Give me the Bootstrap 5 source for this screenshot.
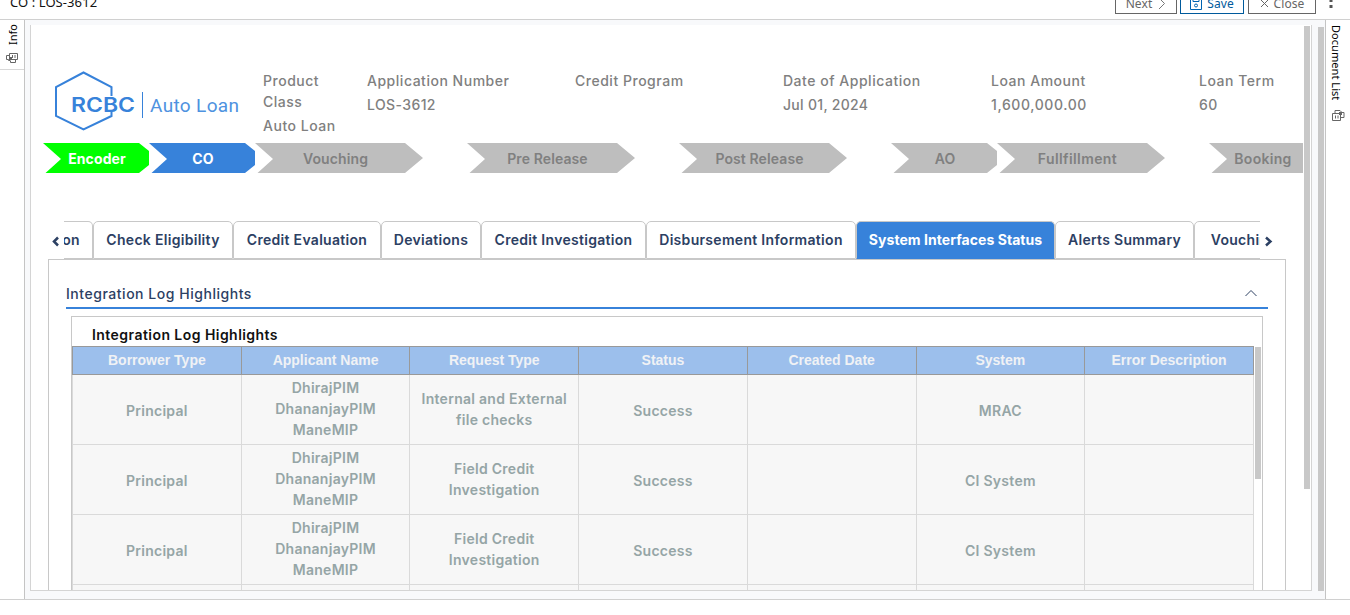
<!DOCTYPE html>
<html lang="en">
<head>
<meta charset="utf-8">
<title>CO : LOS-3612</title>
<link href="https://cdn.jsdelivr.net/npm/bootstrap@5.3.0/dist/css/bootstrap.min.css" rel="stylesheet">
<style>
body{font-family:Inter,"Noto Sans",sans-serif;font-size:14px;line-height:21px;height:615px;overflow:hidden;background:#fff;color:#808080;font-weight:500}
.topbar{height:20px;border-bottom:1px solid #d0d0d0;font-family:"Noto Sans",sans-serif;font-weight:400}
.caption-text{color:#111;font-size:13px;line-height:18px;margin-top:-7px;margin-left:10px;letter-spacing:.08px}
.tool{height:22px;margin-top:-8px;border:1px solid #666;color:#666;font-size:12px;line-height:20px;border-radius:0;padding:0;font-family:"Noto Sans",sans-serif;letter-spacing:.1px;display:flex;align-items:center;justify-content:center;gap:5px;padding-top:1px}
.tool.save{border-color:#005a9c;color:#005a9c}
.workspace{height:580px;border-bottom:1px solid #d0d0d0}
.rail{font-family:"Noto Sans",sans-serif;font-size:11px;font-weight:400;color:#000;line-height:16px}
.rail-left{width:25px;border-right:1px solid #c4c4c4}
.rail-left .rail-item{height:50px;border-bottom:1px solid #d8d8d8}
.rail-right{width:25px;border-left:1px solid #c4c4c4}
.vtext{writing-mode:vertical-rl}
.stage-bg{background:#f8f9fb;padding:5px 0 0 5px}
.sheet{width:1282px;height:566px;border:1px solid #d4d4d4;border-top:0;background:#fff;overflow:hidden}
.sheet-main{width:1272px;margin-right:1px}
.bar-thumb{width:6px;background:#c8c8c8}
.brandbox{width:184px;margin-left:24px;margin-top:46px}
.facts{margin-left:24px;margin-top:45px;letter-spacing:.52px}
.facts>div{width:208px;flex:none}
.facts>div:first-child{width:104px}
.facts span{display:block;margin-bottom:3px}
.facts>div:first-child span:first-child{width:60px}
.steps{height:30px;margin-left:12px;font-weight:700;letter-spacing:.1px}
.slot{width:212px;flex:none;overflow:hidden}
.slot.short{width:106px}
.chev{width:168px;height:30px;background:#bebebe;color:#808080;line-height:32px;text-align:center;clip-path:polygon(0 0,150px 0,168px 15px,150px 30px,2.5px 30px,18px 16px);padding-right:7px;font-weight:600}
.slot.short .chev{width:106px;padding:0 0 0 2px;clip-path:polygon(0 0,96px 0,106px 8px,106px 22px,96px 30px,2.5px 30px,18px 16px)}
.slot.short .done{background:#0f0;color:#fff;font-weight:700}
.slot.short .now{background:#3782da;color:#fff;font-weight:700}
.tabrow{margin:48px 0 0 17px;width:1240px;height:38px;color:#2c4063}
.tabclip{width:1196px;overflow:hidden}
.tabx{flex:none;height:38px;border:1px solid #c8c8c8;border-radius:5px 5px 0 0;text-align:center;line-height:36px;white-space:nowrap;font-weight:600;font-size:14px;letter-spacing:.3px}
.tabx.on{background:#3782da;color:#fff;border-color:#c8c8c8 #c8c8c8 #3782da #c8c8c8;font-weight:700;letter-spacing:.05px}
.panelx{margin-left:17px;width:1238px;height:340px;border:1px solid #c8c8c8;padding:23px 17px 0}
.sect{height:26px;border-bottom:2px solid #3782da;color:#2c4063;width:1202px;letter-spacing:.53px}
.logbox{width:1192px;height:300px;margin:7px 0 0 5px;border:1px solid #c8c8c8}
.logtitle{color:#111;font-weight:600;height:29px;padding:7px 0 0 20px;letter-spacing:.45px}
.logtable{width:1182px;table-layout:fixed;border-collapse:collapse;text-align:center}
.logtable th{height:28px;background:#9cbfec;border:1px solid #999;color:#f0f2f5;font-family:"Liberation Sans",sans-serif;font-weight:700;font-size:14px;padding:0 0 2px;text-align:center;line-height:20px}
.logtable td{height:70px;background:#f7f7f7;border:1px solid #dadada;color:#95a5a6;padding:2px 8px 0;font-weight:600;font-size:14px;line-height:21px;letter-spacing:.28px}
.logtable td.multi{padding:0 8px 2px}
</style>
</head>
<body>
<header class="topbar d-flex">
  <div class="caption-text me-auto">CO : LOS-3612</div>
  <div class="btn tool" style="width:62px;margin-right:3px">Next <svg width="9" height="13" viewBox="0 0 9 13" fill="none" stroke="#777"><path d="M2 1l5.500 5.500L2 12"/></svg></div>
  <div class="btn tool save" style="width:64px;margin-right:4px"><svg width="12" height="12" viewBox="0 0 12 12" fill="none" stroke="#0063b1"><path d="M.5.500h11v11H.5zM3 .5v3h6v-3"/><circle cx="6" cy="7.500" r="1.500"/></svg> Save</div>
  <div class="btn tool" style="width:68px;margin-right:12px"><svg width="9" height="9" viewBox="0 0 9 9" stroke="#666"><path d="M1 1l7 7M8 1L1 8"/></svg> Close</div>
  <svg width="22" height="10" viewBox="0 0 22 10" fill="#555"><path d="M1.500 0h3v2h-3zM1.500 5h3v3h-3z"/></svg>
</header>
<div class="workspace d-flex">
  <aside class="rail rail-left">
    <div class="rail-item d-flex flex-column align-items-center">
      <div class="vtext" style="transform:rotate(180deg);height:25px;margin-left:2px">Info</div>
      <svg style="margin-top:8px;flex:none" width="13" height="11" viewBox="0 0 13 11" fill="none" stroke="#666"><path d="M3.500.500h8v6h-8zM9.500 6.500v3H4.500V8M3 2.500H.5v4h2v1h2M6.500 2v3M9 2v3"/><path fill="#666" stroke="none" d="M3 4h3v3H3z"/></svg>
    </div>
  </aside>
  <main class="stage-bg flex-grow-1 d-flex">
    <div class="sheet d-flex">
      <div class="sheet-main overflow-hidden">
        <div class="d-flex" style="height:118px">
          <svg class="brandbox flex-shrink-0" height="60" viewBox="0 0 184 60">
            <path d="M56.500 25V16L28.500 1.500 1 16v29L28.500 58.500 56.500 45v-5" fill="none" stroke="#3782da" stroke-width="2"/>
            <text x="16" y="41" font-family="Inter" font-size="20" font-weight="600" fill="#3782da" textLength="64" lengthAdjust="spacingAndGlyphs">RCBC</text>
            <path d="M87.500 21v26" stroke="#3782da"/>
            <text x="95" y="41" font-family="Roboto" font-size="19" font-weight="400" fill="#4e92e0" textLength="89">Auto Loan</text>
          </svg>
          <div class="facts d-flex">
            <div><span>Product Class</span><span class="text-nowrap">Auto Loan</span></div>
            <div><span>Application Number</span><span style="letter-spacing:.4px">LOS-3612</span></div>
            <div><span>Credit Program</span></div>
            <div><span>Date of Application</span><span style="letter-spacing:.3px">Jul 01, 2024</span></div>
            <div><span>Loan Amount</span><span style="letter-spacing:.6px">1,600,000.00</span></div>
            <div><span>Loan Term</span><span>60</span></div>
          </div>
        </div>
        <div class="steps d-flex">
          <div class="slot short"><div class="chev done">Encoder</div></div>
          <div class="slot short"><div class="chev now">CO</div></div>
          <div class="slot"><div class="chev">Vouching</div></div>
          <div class="slot"><div class="chev">Pre Release</div></div>
          <div class="slot"><div class="chev">Post Release</div></div>
          <div class="slot short"><div class="chev">AO</div></div>
          <div class="slot"><div class="chev" style="letter-spacing:.4px">Fullfillment</div></div>
          <div class="slot"><div class="chev" style="padding-right:60px;letter-spacing:.3px">Booking</div></div>
        </div>
        <div class="tabrow d-flex align-items-center">
          <svg width="16" height="38" viewBox="0 0 16 38" fill="none" stroke="#2c4063" stroke-width="2.500"><path d="M10 16.500L6 20.500l4 4"/></svg>
          <div class="tabclip d-flex">
            <div class="tabx" style="width:29px;border-left:0;border-top-left-radius:0;padding-right:13px;direction:rtl"><span style="margin-right:-1px">on</span></div>
            <div class="tabx" style="width:140px">Check Eligibility</div>
            <div class="tabx" style="width:148px">Credit Evaluation</div>
            <div class="tabx" style="width:100px">Deviations</div>
            <div class="tabx" style="width:165px">Credit Investigation</div>
            <div class="tabx" style="width:210px">Disbursement Information</div>
            <div class="tabx on" style="width:199px">System Interfaces Status</div>
            <div class="tabx" style="width:139px">Alerts Summary</div>
            <div class="tabx" style="width:100px">Vouching</div>
          </div>
          <svg width="16" height="38" viewBox="0 0 16 38" fill="none" stroke="#2c4063" stroke-width="2.500"><path d="M6 16.500l4.500 4-4.500 4"/></svg>
        </div>
        <div class="panelx">
          <div class="sect d-flex justify-content-between">
            <span>Integration Log Highlights</span>
            <svg width="12" height="8" viewBox="0 0 12 8" fill="none" stroke="#2c4063" style="margin:6px 11px 0 0"><path d="M.5 7L6 1.500 11.500 7"/></svg>
          </div>
          <div class="logbox">
            <div class="logtitle">Integration Log Highlights</div>
            <div class="d-flex align-items-start">
              <table class="logtable">
                <thead><tr><th>Borrower Type</th><th>Applicant Name</th><th>Request Type</th><th>Status</th><th>Created Date</th><th>System</th><th>Error Description</th></tr></thead>
                <tbody>
                  <tr><td>Principal</td><td class="multi">DhirajPIM<br>DhananjayPIM<br>ManeMIP</td><td class="multi">Internal and External<br>file checks</td><td>Success</td><td></td><td>MRAC</td><td></td></tr>
                  <tr><td>Principal</td><td class="multi">DhirajPIM<br>DhananjayPIM<br>ManeMIP</td><td class="multi">Field Credit<br>Investigation</td><td>Success</td><td></td><td>CI System</td><td></td></tr>
                  <tr><td>Principal</td><td class="multi">DhirajPIM<br>DhananjayPIM<br>ManeMIP</td><td class="multi">Field Credit<br>Investigation</td><td>Success</td><td></td><td>CI System</td><td></td></tr>
                  <tr><td></td><td></td><td></td><td></td><td></td><td></td><td></td></tr>
                </tbody>
              </table>
              <div class="bar-thumb" style="height:132px;margin:1px 0 0 1px"></div>
            </div>
          </div>
        </div>
      </div>
      <div class="bar-thumb" style="height:463px;margin-top:1px"></div>
    </div>
    <div class="bar-thumb" style="height:564px;margin:2px 0 0 6px"></div>
  </main>
  <aside class="rail rail-right">
    <div class="vtext" style="margin:5px 0 0 2px;height:82px;white-space:nowrap;letter-spacing:.05px">Document List</div>
    <svg style="margin:3px 0 0 6px;display:block" width="13" height="11" viewBox="0 0 13 11" fill="none" stroke="#666"><path d="M3 3.500H.5v7h8v-7H3v-3h5l2 2h2v5H9M3.500 5.500v3M6 5.500v3"/><path fill="#666" stroke="none" d="M7 2h3v3H7z"/></svg>
  </aside>
</div>
</body>
</html>
